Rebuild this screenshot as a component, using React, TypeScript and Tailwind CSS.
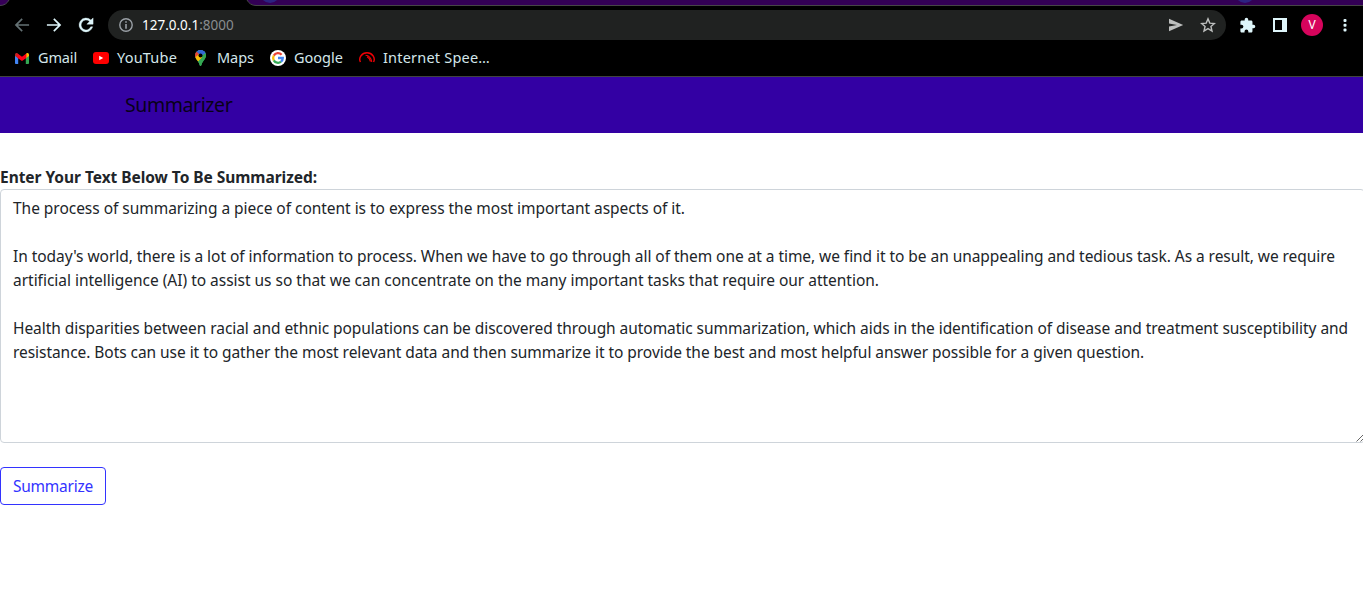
import type { ReactNode } from "react";

function Bookmark({ icon, label, className }: { icon: ReactNode; label: string; className: string }) {
  return (
    <a className="flex h-5 shrink-0 items-center">
      {icon}
      <span className={`whitespace-nowrap text-[#d3e6ea] ${className}`}>{label}</span>
    </a>
  );
}

const GmailIcon = (
  <svg className="mr-[9px] h-[11px] w-[14px]" viewBox="0 0 14 11">
    <path fill="#4285f4" d="M0 2v8.200c0 .4.4.8.8.8H3.200V4z" />
    <path fill="#34a853" d="M10.800 4v7h2.400c.4 0 .8-.4.8-.8V2z" />
    <path fill="#fbbc04" d="M10.800 1v4.300L14 3V1.500C14 .2 12.500-.5 11.400.400z" />
    <path fill="#c5221f" d="M0 1.500V3l3.200 2.300V1L2.600.400C1.500-.5 0 .2 0 1.500z" />
    <path fill="#ff0018" d="M2.600.5v4.400L7 8.100l4.400-3.200V.5L7 3.800z" />
  </svg>
);

const YouTubeIcon = (
  <svg className="mr-[8px] h-3 w-4" viewBox="0 0 16 12">
    <rect width="16" height="12" rx="3" fill="#ff0000" />
    <path fill="#fff" d="M6.200 3.800v4.400L10.200 6z" />
  </svg>
);

const MapsIcon = (
  <svg className="mr-[11px] h-4 w-[11px]" viewBox="0 0 11 16">
    <clipPath id="pin">
      <path d="M5.500 0A5.500 5.500 0 0 0 0 5.500c0 2 1 3.200 2.200 4.800C3.400 12 4.300 13.500 4.700 15.200c.2.900 1.400.9 1.600 0 .4-1.700 1.300-3.200 2.500-4.900C10 8.700 11 7.500 11 5.500A5.500 5.500 0 0 0 5.500 0z" />
    </clipPath>
    <g clipPath="url(#pin)">
      <rect width="11" height="16" fill="#34a853" />
      <path fill="#4285f4" d="M2 0h9v3L5.500 6z" />
      <path fill="#3367d6" d="M1.200 2L3.500-.5H11V2.500L6 6z" />
      <path fill="#ea4335" d="M-1 1.500h2.500L4 4 .500 8-1 6z" />
      <path fill="#fbbc04" d="M0 7.500L4 4l3.500 3.500-5 5z" />
      <path fill="#34a853" d="M11 2L7 7.500l-5 5V16h9z" />
    </g>
    <circle cx="5.500" cy="5.500" r="2" fill="#000" />
  </svg>
);

const GoogleIcon = (
  <svg className="mr-2 h-4 w-4" viewBox="0 0 16 16">
    <circle cx="8" cy="8" r="8" fill="#fff" />
    <g fill="none" strokeWidth="2.300">
      <path stroke="#ea4335" d="M3.800 5.600A4.800 4.800 0 0 1 11.600 4.800" />
      <path stroke="#fbbc05" d="M3.800 5.600a4.800 4.800 0 0 0 0 4.800" />
      <path stroke="#34a853" d="M3.800 10.400A4.800 4.800 0 0 0 11 11.700" />
      <path stroke="#4285f4" d="M8 8h4.800c0 1.600-.6 2.800-1.800 3.700" />
    </g>
  </svg>
);

const SpeedIcon = (
  <svg className="mr-[8px] h-4 w-4" viewBox="0 0 16 16" fill="none" stroke="#f00005">
    <path strokeWidth="1.400" d="M1.400 12C-.8 7.500 3 2.800 8 2.800s8.800 4.700 6.600 9.200" />
    <path strokeWidth="1.100" d="M6.500 5.300c3.500 0 6 3 6.300 6.700M8 6.800c1.700.8 3 2.600 3.500 4.700" />
  </svg>
);

function TabStrip() {
  return (
    <svg className="block h-1.5 w-full" viewBox="0 0 1363 6">
      <rect width="1363" height="6" fill="#000" />
      <path d="M0 0H9Q6 5.500 0 5.500z" fill="#360058" />
      <path d="M9 0Q6 5.500 0 5.500" fill="none" stroke="#4a4550" />
      <path d="M247 0H1363V5.500H256Q250 5 247 0z" fill="#330055" />
      <circle cx="270" cy="-7" r="10" fill="#2c2380" />
      <circle cx="1245" cy="-7" r="10" fill="#2c2380" />
      <path d="M247 0Q250 5.500 256 5.500H1363" fill="none" stroke="#464646" />
    </svg>
  );
}

function Toolbar() {
  return (
    <div className="flex h-[38px] items-center pr-[8px] pl-[12px]">
      <svg className="h-5 w-5 shrink-0" viewBox="0 0 24 24" fill="#647174">
        <path d="M20.500 11H7.200l5.700-5.700L11.500 3.800 3.300 12l8.200 8.200 1.400-1.500L7.200 13h13.300z" />
      </svg>
      <svg className="ml-3 h-5 w-5 shrink-0" viewBox="0 0 24 24" fill="#def5fa">
        <path d="M3.500 11h13.300l-5.700-5.700 1.400-1.500 8.200 8.200-8.200 8.200-1.400-1.500 5.700-5.700H3.500z" />
      </svg>
      <svg className="ml-3 h-5 w-5 shrink-0" viewBox="0 0 24 24" fill="#def5fa" stroke="#def5fa" strokeWidth=".5">
        <path d="M17.900 6.100A8.300 8.300 0 1 0 20 14.200h-2.300A6 6 0 1 1 16.300 7.700L13 11h7.500V3.500z" />
      </svg>
      <div className="ml-3 flex h-[30px] flex-1 items-center rounded-full bg-[#202221] pr-[10px] pl-[11px]">
        <svg className="h-[14px] w-[14px]" viewBox="0 0 14 14" fill="none" stroke="#9aa0a6" strokeWidth="1.400">
          <circle cx="7" cy="7" r="6.200" />
          <path strokeWidth="1.600" d="M7 3.200v1.500M7 6v4.800" />
        </svg>
        <div className="ml-[9px] flex flex-1 text-[13.500px] leading-5">
          <span className="text-white">127.0.0.1</span>
          <span className="text-[#898d90]">:8000</span>
        </div>
        <svg className="h-[14px] w-4" viewBox="0 0 16 14" fill="#bdbfbe">
          <path d="M1 .7L15.200 7 1 13.300V8.500L9 7 1 5.500z" />
        </svg>
        <svg className="ml-[16px] h-4 w-4" viewBox="0 0 24 24" fill="none" stroke="#bdbfbe" strokeWidth="2.100">
          <path d="M12 2.800l2.700 6.400 6.900.6-5.200 4.500 1.600 6.800-6-3.600-6 3.600 1.600-6.800-5.200-4.500 6.900-.6z" />
        </svg>
      </div>
      <svg className="ml-[13px] h-[17px] w-[17px]" viewBox="0 0 24 24" fill="#def5fa">
        <path d="M20.500 11H19V7c0-1.100-.9-2-2-2h-4V3.500a2.500 2.500 0 0 0-5 0V5H4c-1.100 0-2 .9-2 2v3.800h1.500a2.700 2.700 0 0 1 0 5.400H2V20c0 1.100.9 2 2 2h3.800v-1.500a2.700 2.700 0 0 1 5.400 0V22H17c1.100 0 2-.9 2-2v-4h1.500a2.500 2.500 0 0 0 0-5z" />
      </svg>
      <svg className="ml-[17px] h-[14px] w-[14px]" viewBox="0 0 14 14">
        <path fill="#def5fa" fillRule="evenodd" d="M0 0h14v14H0zM2 2v10h7V2z" />
      </svg>
      <div className="ml-[14px] flex h-[22px] w-[22px] items-center justify-center rounded-full bg-[#d6045c] font-['Roboto'] text-[12px] leading-none text-white">
        V
      </div>
      <svg className="ml-[12px] h-4 w-5" viewBox="0 0 20 16" fill="#def5fa">
        <rect x="8.500" y="2" width="3" height="3" rx="1" />
        <rect x="8.500" y="6.800" width="3" height="3" rx="1" />
        <rect x="8.500" y="11.500" width="3" height="3" rx="1" />
      </svg>
    </div>
  );
}

const LINES = [
  { text: "The process of summarizing a piece of content is to express the most important aspects of it.", spacing: "tracking-[-0.033px]" },
  { text: "", spacing: "" },
  { text: "In today's world, there is a lot of information to process. When we have to go through all of them one at a time, we find it to be an unappealing and tedious task. As a result, we require", spacing: "tracking-[-0.055px]" },
  { text: "artificial intelligence (AI) to assist us so that we can concentrate on the many important tasks that require our attention.", spacing: "tracking-[-0.018px]" },
  { text: "", spacing: "" },
  { text: "Health disparities between racial and ethnic populations can be discovered through automatic summarization, which aids in the identification of disease and treatment susceptibility and", spacing: "tracking-[-0.053px]" },
  { text: "resistance. Bots can use it to gather the most relevant data and then summarize it to provide the best and most helpful answer possible for a given question.", spacing: "tracking-[-0.051px]" },
];

export default function App() {
  return (
    <div className="h-[595px] w-full overflow-hidden bg-white font-['Noto_Sans',sans-serif] text-[#212529]">
      <header className="flex h-[77px] flex-col border-b border-[#41443f] bg-black">
        <TabStrip />
        <Toolbar />
        <nav className="flex h-[28px] items-center pl-[15px] text-[14.500px]">
          <Bookmark icon={GmailIcon} label="Gmail" className="w-[55px] tracking-[-0.14px]" />
          <Bookmark icon={YouTubeIcon} label="YouTube" className="w-[78px] tracking-[0.2px]" />
          <Bookmark icon={MapsIcon} label="Maps" className="w-[53px] tracking-[-0.05px]" />
          <Bookmark icon={GoogleIcon} label="Google" className="w-[65px]" />
          <Bookmark icon={SpeedIcon} label="Internet Spee…" className="tracking-[0.2px]" />
        </nav>
      </header>

      <div className="flex h-14 items-center bg-[#3300a3] pb-px pl-[125px]">
        <span className="text-[19.500px] leading-[30px] tracking-[-0.42px] text-[#080018]">Summarizer</span>
      </div>

      <main className="flex w-[1365px] flex-col items-start pt-8">
        <label className="text-[15.500px] leading-6 font-bold tracking-[-0.04px] whitespace-nowrap">
          Enter Your Text Below To Be Summarized:
        </label>
        <div role="textbox" className="relative h-[254px] w-full rounded border border-[#ced4da] px-3 py-1.5 text-[15.500px] leading-6">
          {LINES.map((line, i) => (
            <p key={i} className={`h-6 whitespace-nowrap ${line.spacing}`}>
              {line.text}
            </p>
          ))}
          <svg className="absolute right-0 bottom-0 h-2 w-2" viewBox="0 0 8 8" fill="none" stroke="#555" strokeWidth=".9">
            <path d="M.5 7.500l7-7M4.500 7.500l3-3" />
          </svg>
        </div>
        <button className="mt-6 h-[38px] w-[106px] rounded border border-[#3333ff] px-3 pb-px text-left text-[15.500px] leading-6 tracking-[-0.24px] text-[#3333ff]">
          Summarize
        </button>
      </main>
    </div>
  );
}
